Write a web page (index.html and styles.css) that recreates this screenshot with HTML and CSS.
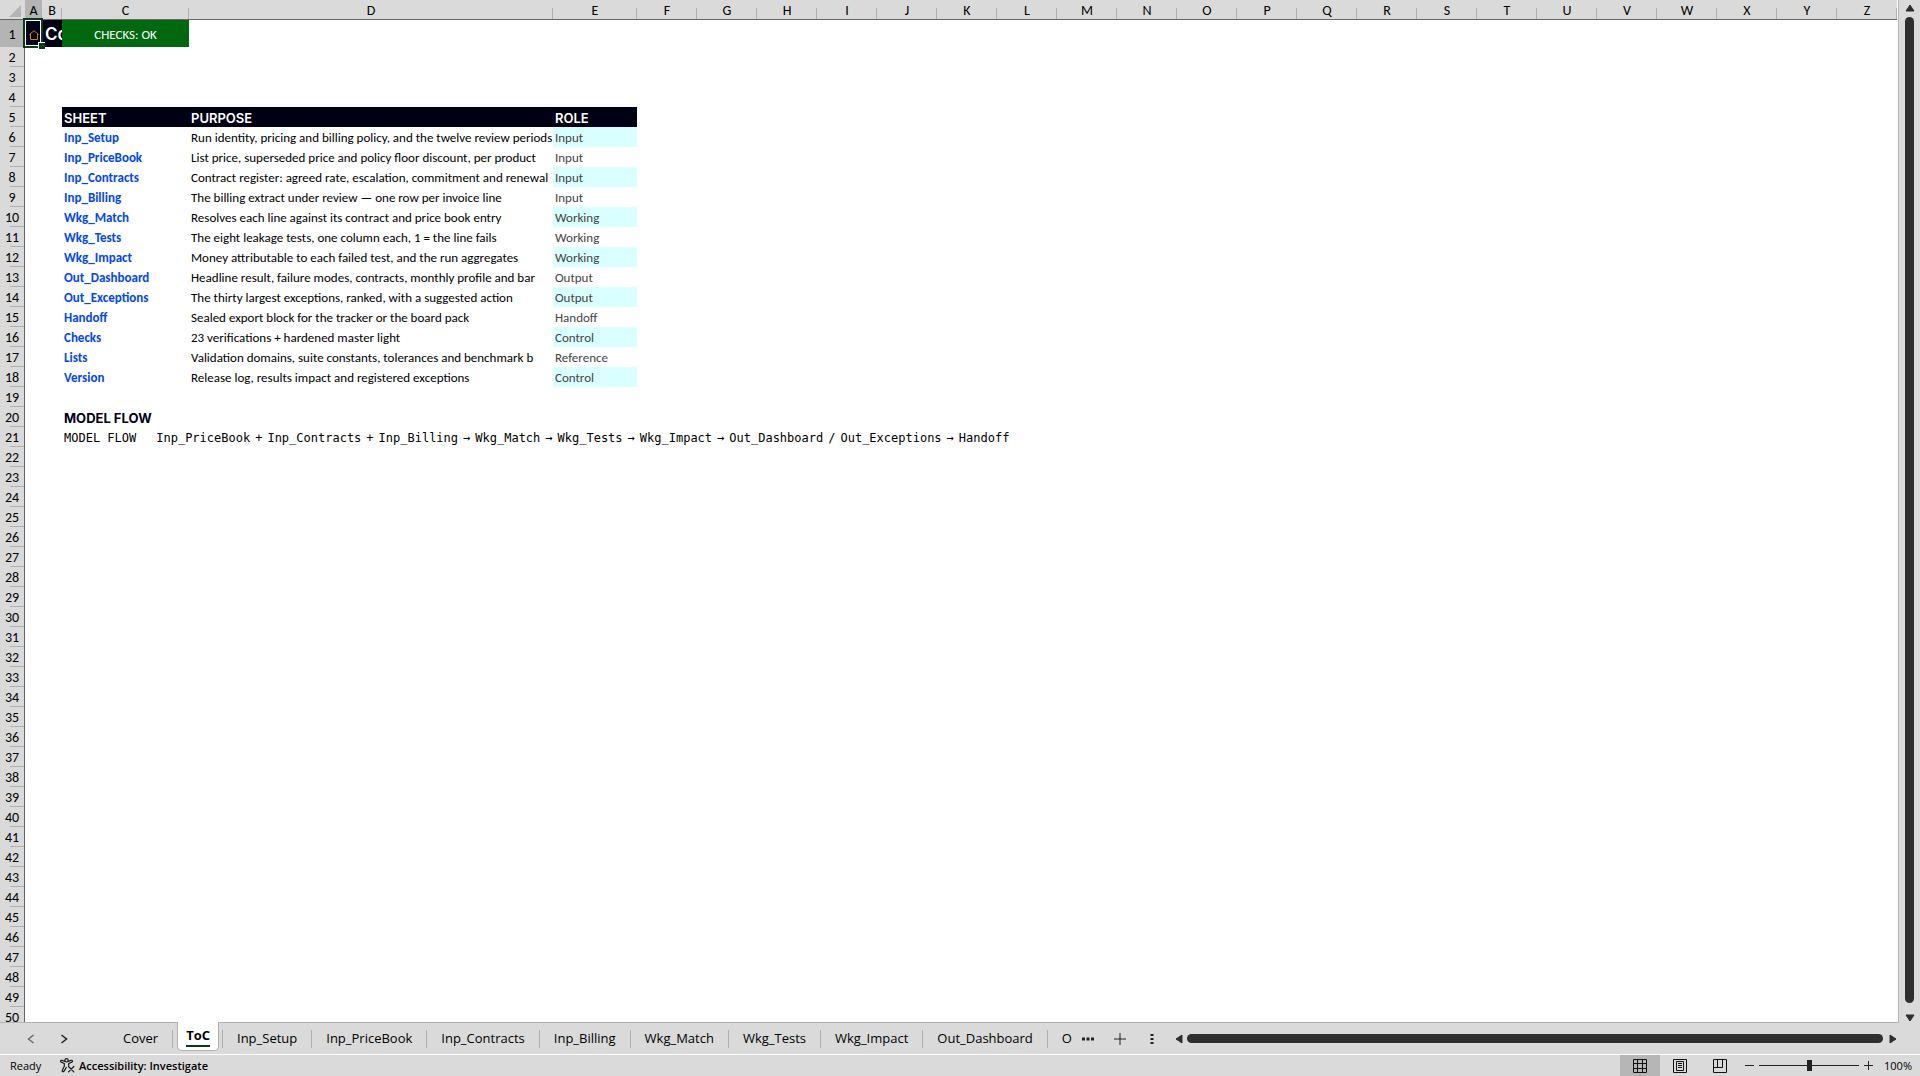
FILE: index.html
```html
<!DOCTYPE html>
<html lang="en">
<head>
  <meta charset="UTF-8" />
  <meta name="viewport" content="width=device-width, initial-scale=1.0"/>
  <title>ToC</title>
  <link rel="stylesheet" href="styles.css">
</head>
<body>

<main class="workspace">
  <div class="sheet">
    <table class="grid">
      <colgroup>
        <col class="col-head"><col class="col-a"><col class="col-b"><col class="col-c"><col class="col-d"><col class="col-e">
        <col span="21" class="col-std">
      </colgroup>
      <thead>
        <tr id="letters"><td class="corner"><svg width="12" height="12" viewBox="0 0 12 12"><path d="M12 0v12H0z" fill="#b4b4b4"/></svg></td></tr>
      </thead>
      <tbody id="rows"></tbody>
    </table>
  </div>
  <div class="vscroll">
    <svg width="10" height="8" viewBox="0 0 10 8"><path d="M5 1 9 7H1z" class="arrow"/></svg>
    <div class="thumb"></div>
    <svg width="10" height="8" viewBox="0 0 10 8"><path d="M5 7 9 1H1z" class="arrow"/></svg>
  </div>
</main>

<nav class="tabbar">
  <div class="tab-arrows">
    <button aria-label="Previous sheet" class="dim"><svg width="8" height="10" viewBox="0 0 8 10"><path d="M6.500 1 1.500 5l5 4"/></svg></button>
    <button aria-label="Next sheet"><svg width="8" height="10" viewBox="0 0 8 10"><path d="M1.500 1l5 4-5 4"/></svg></button>
  </div>
  <div class="tabs">
    <button class="tab">Cover</button>
    <button class="tab active"><span>ToC</span></button>
    <button class="tab">Inp_Setup</button>
    <button class="tab">Inp_PriceBook</button>
    <button class="tab">Inp_Contracts</button>
    <button class="tab">Inp_Billing</button>
    <button class="tab">Wkg_Match</button>
    <button class="tab">Wkg_Tests</button>
    <button class="tab">Wkg_Impact</button>
    <button class="tab">Out_Dashboard</button>
    <button class="tab cut">O</button>
  </div>
  <div class="tab-tools">
    <button aria-label="More sheets"><svg width="12" height="4" viewBox="0 0 12 4"><path d="M0 .5h3v3H0zM4.500.5h3v3h-3zM9 .5h3v3H9z" fill="#222"/></svg></button>
    <button aria-label="New sheet"><svg width="12" height="12" viewBox="0 0 12 12"><path d="M6 0v12M0 6h12" class="thin"/></svg></button>
    <button aria-label="Resize"><svg width="4" height="12" viewBox="0 0 4 12"><path d="M.5 1h3v2h-3zM.5 5h3v2h-3zM.5 9h3v2h-3z" fill="#222"/></svg></button>
  </div>
  <div class="hscroll">
    <svg width="8" height="10" viewBox="0 0 8 10"><path d="M1 5 7 1v8z" class="arrow"/></svg>
    <div class="thumb"></div>
    <svg width="8" height="10" viewBox="0 0 8 10"><path d="M7 5 1 1v8z" class="arrow"/></svg>
  </div>
</nav>

<footer class="status">
  <span class="ready">Ready</span>
  <button class="access">
    <svg width="15" height="15" viewBox="0 0 15 15"><g fill="none" stroke="#1a1a1a" stroke-width="1.200" stroke-linecap="round" stroke-linejoin="round"><circle cx="6.500" cy="2.300" r="1.700"/><path d="M4.800 3.400 1.800 2.300C.6 2-.1 3.500 1.200 4.100L4.300 5.500v2.800L2.300 12.300c-.5 1.300 1.200 2 1.800.8L6.200 9.500M8.200 3.400l3-1.100c1.200-.3 1.900 1.200.6 1.800L8.700 5.500v2M8.500 8.500l5.300 5.300M13.800 8.500l-5.300 5.300"/></g></svg>
    Accessibility: Investigate
  </button>
  <div class="views">
    <button class="on" aria-label="Normal"><svg width="14" height="14" viewBox="0 0 14 14"><path d="M.5.5h13v13H.5zM.5 4.500h13M.5 9.500h13M4.500.5v13M9.500.5v13"/></svg></button>
    <button aria-label="Page layout"><svg width="14" height="14" viewBox="0 0 14 14"><path d="M.5.5h13v13H.5zM3.500 2.500h7v9h-7zM5 4.500h4M5 6.500h4M5 8.500h4"/></svg></button>
    <button aria-label="Page break preview"><svg width="14" height="14" viewBox="0 0 14 14"><path d="M.5.5h13v13H.5zM.5 8.500h9v-8M4.500.5v8"/></svg></button>
  </div>
  <div class="zoom">
    <button aria-label="Zoom out"><svg width="9" height="9" viewBox="0 0 9 9"><path d="M0 4.500h9" class="thin"/></svg></button>
    <input type="range" aria-label="Zoom" min="0" max="200" value="100">
    <button aria-label="Zoom in"><svg width="9" height="9" viewBox="0 0 9 9"><path d="M0 4.500h9M4.500 0v9" class="thin"/></svg></button>
    <span class="percent">100%</span>
  </div>
</footer>

<script>
  const toc = [
    ['Inp_Setup', 'Run identity, pricing and billing policy, and the twelve review periods', 'Input'],
    ['Inp_PriceBook', 'List price, superseded price and policy floor discount, per product', 'Input'],
    ['Inp_Contracts', 'Contract register: agreed rate, escalation, commitment and renewal', 'Input'],
    ['Inp_Billing', 'The billing extract under review — one row per invoice line', 'Input'],
    ['Wkg_Match', 'Resolves each line against its contract and price book entry', 'Working'],
    ['Wkg_Tests', 'The eight leakage tests, one column each, 1 = the line fails', 'Working'],
    ['Wkg_Impact', 'Money attributable to each failed test, and the run aggregates', 'Working'],
    ['Out_Dashboard', 'Headline result, failure modes, contracts, monthly profile and bar', 'Output'],
    ['Out_Exceptions', 'The thirty largest exceptions, ranked, with a suggested action', 'Output'],
    ['Handoff', 'Sealed export block for the tracker or the board pack', 'Handoff'],
    ['Checks', '23 verifications + hardened master light', 'Control'],
    ['Lists', 'Validation domains, suite constants, tolerances and benchmark b', 'Reference'],
    ['Version', 'Release log, results impact and registered exceptions', 'Control']
  ];

  const flow = 'Inp_PriceBook + Inp_Contracts + Inp_Billing → Wkg_Match → Wkg_Tests → Wkg_Impact → Out_Dashboard / Out_Exceptions → Handoff';

  // column letters
  const letters = document.getElementById('letters');
  for (let i = 0; i < 26; i++) {
    const th = document.createElement('th');
    th.textContent = String.fromCharCode(65 + i);
    if (i === 0) th.className = 'picked';
    letters.appendChild(th);
  }

  function cells(n) {
    if (n === 1) {
      return `<td class="home"><svg width="10" height="10" viewBox="0 0 10 10"><path d="M.5 4.500 5 .7l4.500 3.800M1.500 4v5.500h7V4" fill="none" stroke="#d9791a"/></svg><i class="cursor"></i></td>
        <td class="title">Co</td><td class="check">CHECKS: OK</td><td colspan="23"></td>`;
    }
    if (n === 5) {
      return `<td></td><td></td><td class="band">SHEET</td><td class="band">PURPOSE</td><td class="band">ROLE</td><td colspan="21"></td>`;
    }
    if (n >= 6 && n <= 18) {
      const [sheet, purpose, role] = toc[n - 6];
      return `<td></td><td></td><td><a href="#${sheet}">${sheet}</a></td><td>${purpose}</td>
        <td class="role${n % 2 ? '' : ' tint'}">${role}</td><td colspan="21"></td>`;
    }
    if (n === 20) return `<td></td><td></td><td class="section">MODEL FLOW</td><td colspan="23"></td>`;
    if (n === 21) {
      const steps = flow.split(' ').map(s => `<span>${s}</span>`).join('');
      return `<td></td><td></td><td colspan="24"><div class="flow"><span class="flow-label">MODEL FLOW</span>${steps}</div></td>`;
    }
    return '<td colspan="26"></td>';
  }

  // the last row is partly hidden behind the tab bar
  let html = '';
  for (let n = 1; n <= 50; n++) {
    html += `<tr class="${n === 1 ? 'tall' : ''}"><th class="${n === 1 ? 'picked' : ''}">${n}</th>${cells(n)}</tr>`;
  }
  document.getElementById('rows').innerHTML = html;
</script>

</body>
</html>
```
FILE: styles.css
```css
* {
  box-sizing: border-box;
}

body {
  margin: 0;
  height: 100vh;
  display: flex;
  flex-direction: column;
  overflow: hidden;
  background: #dadada;
  color: #000;
  font-family: "Open Sans", sans-serif;
}

button {
  display: flex;
  align-items: center;
  justify-content: center;
  padding: 0;
  border: none;
  background: none;
  color: inherit;
  font: inherit;
}

svg {
  display: block;
  flex: none;
}

.arrow {
  fill: #2e2e2e;
  stroke: #2e2e2e;
  stroke-linejoin: round;
}

.thin {
  stroke: #222;
  fill: none;
}

.thumb {
  background: #2e2e2e;
  border-radius: 5px;
  flex: 1;
}

/* sheet */
.workspace {
  flex: 1;
  min-height: 0;
  display: flex;
}

.sheet {
  flex: 1;
  min-width: 0;
  overflow: hidden;
  background: white;
  border-right: 1px solid #b4b4b4;
  border-bottom: 1px solid #b4b4b4;
}

.grid {
  width: 0;
  table-layout: fixed;
  border-collapse: separate;
  border-spacing: 0;
  font-family: Carlito, Lato, sans-serif;
  font-size: 13px;
  line-height: 18px;
}

.col-head { width: 25px; }
.col-a { width: 17px; }
.col-b { width: 20px; }
.col-c { width: 127px; }
.col-d { width: 364px; }
.col-e { width: 84px; }
.col-std { width: 60px; }

.grid td,
.grid th {
  height: 20px;
  padding: 2px 2px 0;
  overflow: hidden;
  white-space: nowrap;
  vertical-align: middle;
}

.grid th,
.grid .corner {
  padding: 2px 0 0;
  font-size: 14px;
  font-weight: normal;
  text-align: center;
  background: linear-gradient(#b0b0b0, #b0b0b0) no-repeat right bottom / 14px 1px #dadada;
}

.grid tbody th {
  border-right: 1px solid #666;
}

.grid thead th,
.grid .corner {
  line-height: 17px;
  border-bottom: 1px solid #666;
  background-size: 1px 11px;
}

.grid .corner {
  padding: 2px 0 0 9px;
  background-image: none;
}

.grid th.picked {
  background-color: #b4b4b4;
}

.grid .tall td,
.grid .tall th {
  height: 27px;
}

.grid .home {
  position: relative;
  overflow: visible;
  padding: 2px 3px 0 4px;
  background: #000014;
}

.cursor {
  position: absolute;
  inset: -2px -1px -1px -2px;
  border: 2px solid #0b3a1a;
  box-shadow: inset 0 0 0 1px white;
}

.cursor::after {
  content: "";
  position: absolute;
  right: -4px;
  bottom: -3px;
  width: 6px;
  height: 6px;
  background: #0b3a1a;
  border: solid white;
  border-width: 1px 0 0 1px;
}

.grid .title {
  padding-top: 0;
  padding-left: 3px;
  background: #000014;
  color: white;
  font-family: Inter, sans-serif;
  font-size: 17px;
  font-weight: 600;
}

.grid .check {
  background: #00690f;
  color: white;
  text-align: center;
}

.grid .band {
  background: #000014;
  color: white;
  font-family: Inter, sans-serif;
  font-weight: 600;
}

.grid a {
  color: #0046ff;
  font-weight: bold;
  text-decoration: none;
}

.grid .role {
  color: #444;
}

.grid .tint {
  background: #d9ffff;
}

.grid .section {
  font-family: Inter, sans-serif;
  font-weight: bold;
  color: #000014;
}

.flow {
  display: flex;
  gap: 5px;
  font-family: "DejaVu Sans Mono", monospace;
  font-size: 12px;
}

.flow-label {
  margin-right: 15px;
}

.vscroll {
  width: 21px;
  padding: 4px 6px 1px;
  display: flex;
  flex-direction: column;
  align-items: center;
  gap: 5px;
}

.vscroll .thumb {
  width: 9px;
  margin-bottom: 6px;
}

/* sheet tabs */
.tabbar {
  height: 31px;
  display: flex;
  align-items: center;
  font-size: 13px;
}

.tab-arrows {
  display: flex;
  gap: 25px;
  width: 109px;
  padding-left: 27px;
}

.tab-arrows path {
  fill: none;
  stroke: #222;
  stroke-width: 1.5;
}

.dim {
  opacity: 0.6;
}

.tabs {
  display: flex;
  align-items: center;
  height: 31px;
}

.tab {
  height: 18px;
  padding: 0 14px 1px;
  border-right: 1px solid #b0b0b0;
}

.tab.active {
  position: relative;
  top: -1px;
  align-self: flex-start;
  height: 29px;
  margin: 0 3px 0 4px;
  background: white;
  border: 1px solid #b0b0b0;
  border-top: none;
  border-radius: 0 0 5px 5px;
  padding: 0 8px;
  font-weight: bold;
}

.tab.active span {
  line-height: 20px;
  border-bottom: 2px solid #0b3a1a;
}

.tab.active + .tab {
  border-left: 1px solid #b0b0b0;
}

.tab.cut {
  border: none;
  padding-right: 10px;
}

.tab-tools {
  display: flex;
  align-items: center;
  gap: 20px;
}

.tab-tools button {
  width: 12px;
}

.hscroll {
  flex: 1;
  display: flex;
  align-items: center;
  gap: 4px;
  padding: 0 23px 0 17px;
}

.hscroll .thumb {
  height: 9px;
  margin-right: 2px;
}

/* status bar */
.status {
  height: 22px;
  display: flex;
  align-items: center;
  border-top: 1px solid white;
  font-size: 11px;
}

.ready {
  padding-left: 10px;
  width: 60px;
}

.access {
  gap: 4px;
  font-weight: 600;
}

.views {
  display: flex;
  align-self: stretch;
  margin-left: auto;
}

.views button {
  width: 40px;
}

.views .on {
  background: #b6b6b6;
}

.views path {
  fill: none;
  stroke: #111;
}

.zoom {
  display: flex;
  align-items: center;
  gap: 5px;
  padding: 0 8px 0 5px;
}

.zoom input {
  appearance: none;
  width: 100px;
  height: 11px;
  margin: 0;
  background: linear-gradient(#222, #222) no-repeat center / 100% 1px;
}

.zoom input::-webkit-slider-thumb {
  appearance: none;
  width: 5px;
  height: 11px;
  background: #222;
}

.percent {
  width: 34px;
  text-align: right;
}
```
